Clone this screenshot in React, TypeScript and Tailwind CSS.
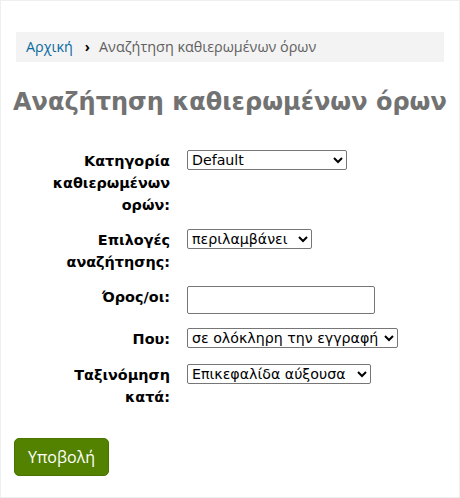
import React from "react";

const labelCls =
  "w-[130px] shrink-0 text-right font-bold text-[14.4px] leading-[22px] text-black";
const selCls =
  "block h-[20px] text-[14.2px] border border-[#767676] rounded-[2px] bg-white text-black";
const dv = { fontFamily: '"DejaVu Sans", sans-serif' };

export default function App() {
  return (
    <div
      className="w-[460px] h-[498px] border border-[#eef0f0] bg-white box-border overflow-hidden"
      style={dv}
    >
      <div className="pt-[31px] px-[15px]">
        <div
          className="h-[30px] bg-[#f3f3f3] flex items-center pl-[10px] text-[14.4px]"
          style={{ fontFamily: '"Open Sans", sans-serif' }}
        >
          <a href="#" className="text-[#0b6a9f]">
            Αρχική
          </a>
          <span className="ml-[12px] mr-[9px] font-bold text-black text-[14px] leading-none">›</span>
          <span className="text-[#606060]">Αναζήτηση καθιερωμένων όρων</span>
        </div>
      </div>
      <div className="px-[12px]">
        <h1 className="mt-[24px] text-[24px] font-bold text-[#727272] leading-[32px] whitespace-nowrap">
          Αναζήτηση καθιερωμένων όρων
        </h1>
        <div className="mt-[32px] flex flex-col">
          <div className="flex gap-[17px] ml-[27px] mb-[13px]">
            <div className={labelCls}>Κατηγορία καθιερωμένων ορών:</div>
            <div>
              <select className={`w-[160px] ${selCls}`} style={dv}>
                <option>Default</option>
              </select>
            </div>
          </div>
          <div className="flex gap-[17px] ml-[27px] mb-[13px]">
            <div className={labelCls}>Επιλογές αναζήτησης:</div>
            <div>
              <select className={`w-[125px] ${selCls}`} style={dv}>
                <option>περιλαμβάνει</option>
              </select>
            </div>
          </div>
          <div className="flex gap-[17px] ml-[27px] mb-[14px]">
            <div className={labelCls}>Όρος/οι:</div>
            <div>
              <input
                type="text"
                className="block w-[188px] h-[28px] border border-[#767676] rounded-[2px] bg-white"
              />
            </div>
          </div>
          <div className="flex gap-[17px] ml-[27px] mb-[14px]">
            <div className={labelCls}>Που:</div>
            <div>
              <select className={`w-[211px] ${selCls}`} style={dv}>
                <option>σε ολόκληρη την εγγραφή</option>
              </select>
            </div>
          </div>
          <div className="flex gap-[17px] ml-[27px]">
            <div className={labelCls}>Ταξινόμηση κατά:</div>
            <div>
              <select className={`w-[184px] ${selCls}`} style={dv}>
                <option>Επικεφαλίδα αύξουσα</option>
              </select>
            </div>
          </div>
        </div>
        <button
          className="block mt-[30px] ml-[1px] w-[95px] h-[38px] bg-[#538200] border border-[#4a7400] rounded-[5px] text-white text-[16px]"
          style={{ fontFamily: '"Open Sans", sans-serif' }}
        >
          Υποβολή
        </button>
      </div>
    </div>
  );
}
